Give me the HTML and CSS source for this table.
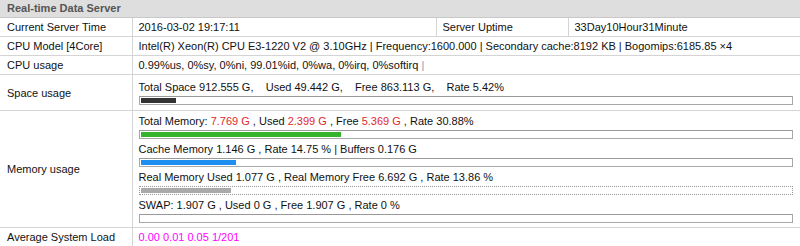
FILE: index.html
```html
<!DOCTYPE html>
<html>
<head>
<meta charset="utf-8">
<link rel="stylesheet" href="styles.css">
</head>
<body>
<table class="info">
  <colgroup>
    <col class="c1"><col class="c2"><col class="c3"><col class="c4">
  </colgroup>
  <tr><th colspan="4" class="head">Real-time Data Server</th></tr>
  <tr>
    <td class="label">Current Server Time</td>
    <td>2016-03-02 19:17:11</td>
    <td>Server Uptime</td>
    <td>33Day10Hour31Minute</td>
  </tr>
  <tr>
    <td class="label">CPU Model [4Core]</td>
    <td colspan="3">Intel(R) Xeon(R) CPU E3-1220 V2 @ 3.10GHz | Frequency:1600.000 | Secondary cache:8192 KB | Bogomips:6185.85 ×4</td>
  </tr>
  <tr>
    <td class="label">CPU usage</td>
    <td colspan="3">0.99%us, 0%sy, 0%ni, 99.01%id, 0%wa, 0%irq, 0%softirq <span class="pipe">|</span></td>
  </tr>
  <tr>
    <td class="label">Space usage</td>
    <td colspan="3" class="space">
      <div class="line">Total Space 912.555 G,&nbsp;&nbsp;&nbsp; Used 49.442 G,&nbsp;&nbsp;&nbsp; Free 863.113 G,&nbsp;&nbsp;&nbsp; Rate 5.42%</div>
      <div class="bar"><div class="fill dark" style="width:5.42%"></div></div>
    </td>
  </tr>
  <tr>
    <td class="label">Memory usage</td>
    <td colspan="3" class="mem">
      <div class="item">
        <div class="line">Total Memory: <span class="red">7.769 G</span> , Used <span class="red">2.399 G</span> , Free <span class="red">5.369 G</span> , Rate 30.88%</div>
        <div class="bar"><div class="fill green" style="width:30.88%"></div></div>
      </div>
      <div class="item">
        <div class="line">Cache Memory 1.146 G , Rate 14.75 % | Buffers 0.176 G</div>
        <div class="bar"><div class="fill blue" style="width:14.75%"></div></div>
      </div>
      <div class="item">
        <div class="line">Real Memory Used 1.077 G , Real Memory Free 6.692 G , Rate 13.86 %</div>
        <div class="bar dotted"><div class="fill grey" style="width:13.86%"></div></div>
      </div>
      <div class="item">
        <div class="line">SWAP: 1.907 G , Used 0 G , Free 1.907 G , Rate 0 %</div>
        <div class="bar"><div class="fill grey" style="width:0%"></div></div>
      </div>
    </td>
  </tr>
  <tr>
    <td class="label">Average System Load</td>
    <td colspan="3" class="load">0.00 0.01 0.05 1/201</td>
  </tr>
</table>
</body>
</html>
```

FILE: styles.css
```css
html, body {
  margin: 0;
  padding: 0;
  background: #fff;
}
body {
  font-family: "Liberation Sans", Arial, sans-serif;
  font-size: 11px;
  color: #111;
}
.info {
  width: 800px;
  border-collapse: collapse;
  table-layout: fixed;
}
.c1 { width: 132px; }
.c2 { width: 304px; }
.c3 { width: 132px; }
.c4 { width: 232px; }

.head {
  background: #dedede;
  color: #555;
  font-weight: bold;
  text-align: left;
  padding: 2px 7px;
  line-height: 13px;
  border-bottom: 1px solid #c8c8c8;
}
.info td {
  padding: 2px 6px;
  line-height: 14px;
  border-bottom: 1px solid #d4d4d4;
  border-left: 1px solid #d4d4d4;
  vertical-align: middle;
  white-space: nowrap;
}
.info td.label {
  border-left: none;
  padding-left: 7px;
}
.pipe { color: #8a9ab8; }
.info td.space {
  padding-top: 5px;
  padding-bottom: 5px;
}
.info td.mem {
  padding-top: 3px;
  padding-bottom: 1px;
}
.item {
  padding-bottom: 3px;
}
.bar {
  margin-top: 2px;
  width: 650px;
  height: 5px;
  padding: 1px;
  border: 1px solid #a8a8a8;
  border-top-color: #999;
  background: #fff;
}
.bar.dotted {
  border: 1px dotted #999;
}
.fill {
  height: 5px;
}
.dark { background: #333; }
.green { background: #36b32d; }
.blue { background: #1e8ef0; }
.grey { background: #aaa; }
.red { color: #e0282c; }
.info td.load { color: #f0f; }
```
